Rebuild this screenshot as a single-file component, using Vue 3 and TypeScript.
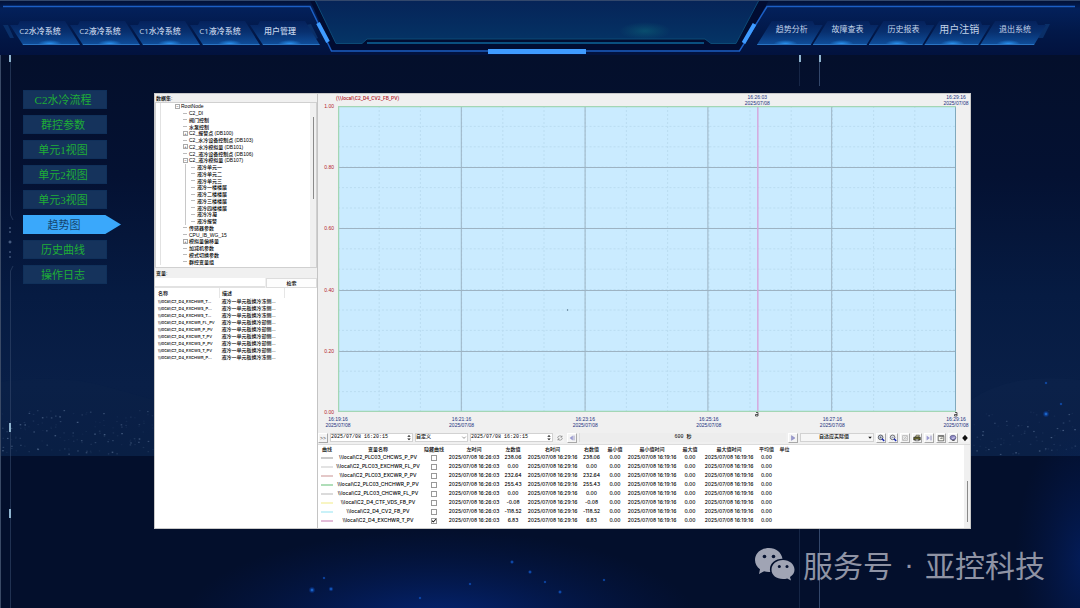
<script setup lang="ts">
import { ref } from 'vue'

interface TreeRow { text: string; level: number; mark?: '+' | '-' }
interface Curve { name: string; color: string; hidden: boolean; left: string; right: string }

const leftTabs = ['C2水冷系统', 'C2液冷系统', 'C1水冷系统', 'C1液冷系统', '用户管理']
const rightTabs = ['趋势分析', '故障查表', '历史报表', '用户注销', '退出系统']
const menu = ['C2水冷流程', '群控参数', '单元1视图', '单元2视图', '单元3视图', '趋势图', '历史曲线', '操作日志']
const active = ref('趋势图')

const tree: TreeRow[] = [
  { text: 'RootNode', level: 0, mark: '-' },
  { text: 'C2_DI', level: 1 },
  { text: '阀门控制', level: 1 },
  { text: '水泵控制', level: 1 },
  { text: 'C2_报警点 (DB100)', level: 1, mark: '+' },
  { text: 'C2_水冷设备控制点 (DB103)', level: 1 },
  { text: 'C2_水冷模拟量 (DB101)', level: 1, mark: '+' },
  { text: 'C2_液冷设备控制点 (DB106)', level: 1 },
  { text: 'C2_液冷模拟量 (DB107)', level: 1, mark: '-' },
  { text: '液冷单元一', level: 2 },
  { text: '液冷单元二', level: 2 },
  { text: '液冷单元三', level: 2 },
  { text: '液冷一楼楼层', level: 2 },
  { text: '液冷二楼楼层', level: 2 },
  { text: '液冷三楼楼层', level: 2 },
  { text: '液冷四楼楼层', level: 2 },
  { text: '液冷冷凝', level: 2 },
  { text: '液冷报警', level: 2 },
  { text: '传感器参数', level: 1 },
  { text: 'CPU_IB_WG_15', level: 1 },
  { text: '模拟量偏移量', level: 1, mark: '+' },
  { text: '加减机参数', level: 1 },
  { text: '模式切换参数', level: 1 },
  { text: '群控变量组', level: 1 },
]

const variables = [
  ['\\\\local\\C2_D4_EXCHWR_T...', '液冷一单元板换冷冻侧...'],
  ['\\\\local\\C2_D4_EXCHWS_P...', '液冷一单元板换冷冻侧...'],
  ['\\\\local\\C2_D4_EXCHWS_T...', '液冷一单元板换冷冻侧...'],
  ['\\\\local\\C2_D4_EXCWR_FL_PV', '液冷一单元板换冷却侧...'],
  ['\\\\local\\C2_D4_EXCWR_P_PV', '液冷一单元板换冷却侧...'],
  ['\\\\local\\C2_D4_EXCWR_T_PV', '液冷一单元板换冷却侧...'],
  ['\\\\local\\C2_D4_EXCWS_P_PV', '液冷一单元板换冷却侧...'],
  ['\\\\local\\C2_D4_EXCWS_T_PV', '液冷一单元板换冷却侧...'],
  ['\\\\local\\C2_D4_EXCHWR_P...', '液冷一单元板换冷冻侧...'],
]

const yTicks = ['1.00', '0.80', '0.60', '0.40', '0.20', '0.00']
const xTicks = ['16:19:16', '16:21:16', '16:23:16', '16:25:16', '16:27:16', '16:29:16']
const date = '2025/07/08'
const range = (n: number): number[] => Array.from({ length: n }, (_, i) => i)

const columns = ['曲线', '变量名称', '隐藏曲线', '左时间', '左数值', '右时间', '右数值', '最小值', '最小值时间', '最大值', '最大值时间', '平均值', '单位']
const curves = ref<Curve[]>([
  { name: '\\\\local\\C2_PLC03_CHCWS_P_PV', color: '#a8a8a8', hidden: false, left: '238.06', right: '238.06' },
  { name: '\\\\local\\C2_PLC03_EXCHWR_FL_PV', color: '#d0d0d0', hidden: false, left: '0.00', right: '0.00' },
  { name: '\\\\local\\C2_PLC03_EXCWR_P_PV', color: '#d2a3a3', hidden: false, left: '232.64', right: '232.64' },
  { name: '\\\\local\\C2_PLC03_CHCHWR_P_PV', color: '#7cc98a', hidden: false, left: '255.43', right: '255.43' },
  { name: '\\\\local\\C2_PLC03_CHCWR_FL_PV', color: '#c4c4c4', hidden: false, left: '0.00', right: '0.00' },
  { name: '\\\\local\\C2_D4_CTF_VDS_FB_PV', color: '#f3ee9c', hidden: false, left: '-0.08', right: '-0.08' },
  { name: '\\\\local\\C2_D4_CV2_FB_PV', color: '#a5e8f3', hidden: false, left: '-118.52', right: '-118.52' },
  { name: '\\\\local\\C2_D4_EXCHWR_T_PV', color: '#cf8fbe', hidden: true, left: '6.83', right: '6.83' },
])

// Scattered city lights along the horizon.
const lights = range(230).map((i) => {
  const a = (i * 7919 + 131) % 997
  const b = (i * i * 31 + i * 171 + 47) % 613
  const left = i % 3 !== 0
  return {
    x: left ? (a / 997) * 154 : 972 + (a / 997) * 104,
    y: 410 + (b / 613) * 44,
    o: 0.05 + Math.pow(((i * 37) % 11) / 10, 3) * 0.3,
  }
})
const sparks = [
  [312, 590, 1.6], [331, 589, 1.2], [324, 578, 0.8], [512, 562, 1], [530, 572, 1], [470, 584, 0.8],
  [560, 592, 1], [604, 580, 0.8], [1046, 414, 1.6], [1061, 404, 0.8], [1046, 383, 0.8], [420, 598, 0.8], [545, 582, 0.8],
]
</script>

<template>
  <div class="page">
    <svg class="backdrop" viewBox="0 0 1080 608" preserveAspectRatio="none" aria-hidden="true">
      <defs>
        <linearGradient id="sky" x1="0" y1="0" x2="0" y2="1">
          <stop offset="0" stop-color="#040f2b" />
          <stop offset="0.3" stop-color="#041132" />
          <stop offset="0.6" stop-color="#061b42" />
          <stop offset="0.82" stop-color="#091f47" />
          <stop offset="1" stop-color="#081d43" />
        </linearGradient>
        <radialGradient id="glow">
          <stop offset="0" stop-color="#04309a" stop-opacity="0.7" />
          <stop offset="1" stop-color="#04206a" stop-opacity="0" />
        </radialGradient>
        <radialGradient id="spark">
          <stop offset="0" stop-color="#3f9dff" />
          <stop offset="0.3" stop-color="#1262d8" stop-opacity="0.7" />
          <stop offset="1" stop-color="#0a3aa8" stop-opacity="0" />
        </radialGradient>
      </defs>
      <rect width="1080" height="608" fill="#030f2c" />
      <rect y="55" width="1080" height="401" fill="url(#sky)" />
      <path d="M0 382 Q60 374 104 386 T154 400 V456 H0Z" fill="#0c2348" opacity="0.3" />
      <path d="M971 400 Q1010 372 1080 380 V456 H971Z" fill="#0f284f" opacity="0.3" />
      <rect v-for="(l, i) in lights" :key="i" :x="l.x" :y="l.y" width="1.6" height="1.2" fill="#a9c4e6" :opacity="l.o" />
      <ellipse cx="440" cy="625" rx="260" ry="95" fill="url(#glow)" />
      <ellipse cx="1085" cy="560" rx="70" ry="140" fill="url(#glow)" opacity="0.6" />
      <circle v-for="(s, i) in sparks" :key="'s' + i" :cx="s[0]" :cy="s[1]" :r="s[2] * 2.2" fill="url(#spark)" />
      <g fill="none" stroke="#33476b">
        <path d="M10.500 62V215L13 220M13 266L10.500 271V608" opacity="0.6" />
        <path d="M799.500 62V86M799.500 529V608" opacity="0.4" />
        <path d="M819.500 62V86M819.500 529V608" />
      </g>
      <path d="M8.500 242H11.500M10 240.500V243.500M9 228H11M9 232H11M9 252H11M9 257H11" stroke="#5d7397" fill="none" />
      <g fill="#8fb4cf">
        <rect x="9" y="55" width="2" height="7" />
        <rect x="9" y="423" width="2" height="9" />
        <rect x="9" y="509" width="2" height="9" />
        <rect x="799" y="55" width="2" height="7" />
        <rect x="819" y="55" width="2" height="7" />
      </g>
      <path d="M0.500 608V0.500H1080" stroke="#3a4a66" fill="none" />
    </svg>

    <header class="topbar">
      <svg class="frame" viewBox="0 0 1080 55" preserveAspectRatio="none" aria-hidden="true">
        <defs>
          <linearGradient id="bar" x1="0" y1="0" x2="0" y2="1">
            <stop offset="0" stop-color="#021033" />
            <stop offset="0.16" stop-color="#03205a" />
            <stop offset="0.6" stop-color="#021848" />
            <stop offset="1" stop-color="#02123e" />
          </linearGradient>
          <linearGradient id="hood" x1="0" y1="0" x2="0" y2="1">
            <stop offset="0" stop-color="#062458" />
            <stop offset="0.6" stop-color="#052d60" />
            <stop offset="1" stop-color="#053566" />
          </linearGradient>
          <radialGradient id="haze">
            <stop offset="0" stop-color="#0b6276" stop-opacity="0.6" />
            <stop offset="1" stop-color="#0b5872" stop-opacity="0" />
          </radialGradient>
        </defs>
        <rect width="1080" height="55" fill="url(#bar)" />
        <path d="M310 0L333 52H740L769 0Z" fill="#010c31" />
        <path d="M315 0L336 43.500H362L367 39H705L711 43.500H736L759 0Z" fill="url(#hood)" stroke="#0c4a76" />
        <path d="M367 43H704" stroke="#0a4f80" stroke-width="2" />
        <ellipse cx="645" cy="31" rx="26" ry="9" fill="url(#haze)" />
        <path d="M3 6.500H310L331.500 51H739.500L767 6.500H1075" fill="none" stroke="#1c5fc4" stroke-width="1.500" />
        <path d="M318 23L328 42M754.500 24L743.500 43" stroke="#3f9bff" stroke-width="4" />
        <rect x="488" y="49" width="98" height="5" fill="#3f9bff" />
        <path d="M3 25L8 25L14 38H10ZM306 25L311 24L318 38L314 40ZM1045 24H1050L1043 38H1038Z" fill="#0a2f68" />
        <path d="M0 0.500H1080" stroke="#33486c" />
      </svg>
      <nav class="tabs tabs-left" aria-label="系统">
        <button v-for="t in leftTabs" :key="t" type="button"><span>{{ t }}</span></button>
      </nav>
      <nav class="tabs tabs-right" aria-label="功能">
        <button v-for="t in rightTabs" :key="t" type="button" :class="{ large: t === '用户注销' }"><span>{{ t }}</span></button>
      </nav>
    </header>

    <main class="content">
      <nav class="menu" aria-label="菜单">
        <button v-for="m in menu" :key="m" type="button" :class="{ active: m === active }" @click="active = m">{{ m }}</button>
      </nav>

      <section class="window">
        <aside class="browser">
          <h2>数据集:</h2>
          <div class="tree-box">
            <ul class="tree">
              <li v-for="(r, i) in tree" :key="i" :class="'level-' + r.level">
                <i :class="['twig', { boxed: r.mark }]">{{ r.mark === '+' ? '+' : r.mark ? '−' : '' }}</i>{{ r.text }}
              </li>
            </ul>
            <div class="track"><div class="thumb"></div></div>
          </div>
          <label class="var-label" for="var-search">变量:</label>
          <div class="search">
            <input id="var-search" type="text" />
            <button type="button">检索</button>
          </div>
          <div class="var-box">
            <table class="vars">
              <thead><tr><th>名称</th><th>描述</th></tr></thead>
              <tbody>
                <tr v-for="v in variables" :key="v[0]"><td>{{ v[0] }}</td><td>{{ v[1] }}</td></tr>
              </tbody>
            </table>
          </div>
        </aside>

        <div class="trend">
          <div class="chart">
            <div class="legend">(\\local\C2_D4_CV2_FB_PV)</div>
            <div class="marks">
              <span class="lead"></span>
              <span class="tick">16:26:03<br />{{ date }}</span>
              <span class="rest"></span>
              <span class="tick">16:29:16<br />{{ date }}</span>
            </div>
            <div class="y-axis"><span v-for="y in yTicks" :key="y">{{ y }}</span></div>
            <svg class="plot" viewBox="0 0 619 306" preserveAspectRatio="none" role="img" aria-label="趋势图">
              <rect width="619" height="306" fill="#caebff" />
              <g stroke="#a9cde2" stroke-dasharray="2 2" opacity="0.45">
                <path v-for="i in range(15)" :key="'v' + i" :d="`M${(i * 619) / 15} 0V306`" />
                <path v-for="i in range(15)" :key="'h' + i" :d="`M0 ${(i * 306) / 15}H619`" />
              </g>
              <g stroke="#9db3c3" fill="none">
                <path v-for="i in range(4)" :key="'mv' + i" :d="`M${Math.round(((i + 1) * 619) / 5) - 0.5} 0V306`" />
                <path v-for="i in range(4)" :key="'mh' + i" :d="`M0 ${Math.round(((i + 1) * 306) / 5) + 0.5}H619`" />
              </g>
              <path d="M420.500 0V306" stroke="#d5a8de" stroke-width="1.500" />
              <path d="M618.500 0V306" stroke="#7fa9bd" />
              <path d="M0.500 306V0.500H619M0 305.500H619" fill="none" stroke="#a3d6b5" stroke-width="1.500" />
              <circle cx="230" cy="204" r="0.700" fill="#4b6a80" />
            </svg>
            <div class="handles">
              <span class="lead"></span>
              <svg viewBox="0 0 4 5"><path d="M1 0.500H3V4H0.500V2.500H3" fill="none" stroke="#333" stroke-width="0.800" /></svg>
              <span class="rest"></span>
              <svg viewBox="0 0 4 5"><path d="M1 0.500H3V4H0.500V2.500H3" fill="none" stroke="#333" stroke-width="0.800" /></svg>
            </div>
            <div class="x-axis"><span v-for="x in xTicks" :key="x" class="tick">{{ x }}<br />{{ date }}</span></div>
          </div>

          <div class="toolbar">
            <button type="button" class="tool" aria-label="展开">&gt;&gt;</button>
            <div class="field stamp">
              <input type="text" value="2025/07/08 16:20:15" aria-label="开始时间" />
              <svg viewBox="0 0 6 8"><path d="M1 3L3 1L5 3ZM1 5L3 7L5 5Z" fill="#222" /></svg>
            </div>
            <div class="field span">
              <select aria-label="时间范围"><option>自定义</option></select>
              <svg viewBox="0 0 6 8"><path d="M1 3L3 5L5 3" fill="none" stroke="#555" stroke-width="0.700" /></svg>
            </div>
            <div class="field stamp">
              <input type="text" value="2025/07/08 16:20:15" aria-label="结束时间" />
              <svg viewBox="0 0 6 8"><path d="M1 3L3 1L5 3ZM1 5L3 7L5 5Z" fill="#222" /></svg>
            </div>
            <button type="button" class="tool flat" aria-label="刷新">
              <svg viewBox="0 0 10 10"><path d="M2 5a3 2.600 0 0 1 5.500-1.500M8 5a3 2.600 0 0 1-5.500 1.500M7.500 2V4H5.500M2.500 8V6H4.500" fill="none" stroke="#777" stroke-width="0.800" /></svg>
            </button>
            <button type="button" class="tool" aria-label="后退">
              <svg viewBox="0 0 10 10"><path d="M6 2V8L2 5Z" fill="#9a9ad0" /><path d="M7.500 2V8" stroke="#8888b8" /></svg>
            </button>
            <output class="duration">600 秒</output>
            <button type="button" class="tool" aria-label="前进">
              <svg viewBox="0 0 10 10"><path d="M3 2V8L7.500 5Z" fill="#9a9ad0" stroke="#7777b0" stroke-width="0.500" /></svg>
            </button>
            <div class="field mode">
              <select aria-label="数值模式"><option>自适应实际值</option></select>
              <svg viewBox="0 0 6 8"><path d="M1 3H5L3 5.500Z" fill="#111" /></svg>
            </div>
            <button type="button" class="tool" aria-label="放大">
              <svg viewBox="0 0 10 10"><circle cx="4.500" cy="4.200" r="2.900" fill="#cfd8ee" stroke="#333" stroke-width="0.900" /><path d="M3.300 4.200H5.700M4.500 3V5.400" stroke="#333" stroke-width="0.600" /><path d="M6.300 6L9 8.800" stroke="#1b2bb5" stroke-width="2" /></svg>
            </button>
            <button type="button" class="tool" aria-label="缩小">
              <svg viewBox="0 0 10 10"><circle cx="4.500" cy="4.200" r="2.900" fill="#e4e8f2" stroke="#444" stroke-width="0.900" /><path d="M3.300 4.200H5.700" stroke="#333" stroke-width="0.600" /><path d="M6.300 6L9 8.800" stroke="#1b2bb5" stroke-width="2" /></svg>
            </button>
            <button type="button" class="tool" aria-label="还原">
              <svg viewBox="0 0 10 10"><path d="M2 2H8V8H2ZM3.500 4.500L5 3M5 7L7 5M3 7L7 3" fill="none" stroke="#aaa" stroke-width="0.900" /></svg>
            </button>
            <button type="button" class="tool" aria-label="打印">
              <svg viewBox="0 0 10 10"><path d="M3 4L4 1.500H8L7.200 4Z" fill="#e8e2a0" stroke="#222" stroke-width="0.700" /><path d="M1 4H9V7.500H1Z" fill="#6f6f2c" stroke="#222" stroke-width="0.900" /><path d="M3 6.500H7V8.500H3Z" fill="#eee" stroke="#222" stroke-width="0.600" /></svg>
            </button>
            <button type="button" class="tool" aria-label="末尾">
              <svg viewBox="0 0 10 10"><path d="M2 2V8L6 5Z" fill="#9a9ad0" /><path d="M7.500 2V8" stroke="#7777b0" /></svg>
            </button>
            <button type="button" class="tool" aria-label="保存">
              <svg viewBox="0 0 10 10"><path d="M1.500 2H8.500V8.500H1.500Z" fill="#f7f7ee" stroke="#444" stroke-width="0.900" /><path d="M2 3H8M4 5.500H7M6 4.500L7.500 3" stroke="#555" stroke-width="0.900" /></svg>
            </button>
            <button type="button" class="tool" aria-label="设置">
              <svg viewBox="0 0 10 10"><ellipse cx="5" cy="4.600" rx="3.600" ry="3" fill="#8d88c4" stroke="#4a4a78" stroke-width="0.800" /><path d="M4 5L5 6L7 3.500" fill="none" stroke="#fff" stroke-width="0.900" /><path d="M4 8H7" stroke="#333" /></svg>
            </button>
            <button type="button" class="tool flat" aria-label="移动">
              <svg viewBox="0 0 10 10"><path d="M5 1L8.500 5L5 9L1.500 5Z" fill="#111" /></svg>
            </button>
          </div>

          <div class="data">
            <table class="curves">
              <colgroup><col v-for="(c, i) in columns" :key="c" :class="'c' + i" /><col /></colgroup>
              <thead><tr><th v-for="c in columns" :key="c">{{ c }}</th><th></th></tr></thead>
              <tbody>
                <tr v-for="c in curves" :key="c.name">
                  <td><svg class="swatch" viewBox="0 0 12 2"><path d="M0 1H12" :stroke="c.color" stroke-width="1.200" /></svg></td>
                  <td>{{ c.name }}</td>
                  <td><input v-model="c.hidden" type="checkbox" :aria-label="'隐藏 ' + c.name" /></td>
                  <td>{{ date }} 16:26:03</td>
                  <td>{{ c.left }}</td>
                  <td>{{ date }} 16:29:16</td>
                  <td>{{ c.right }}</td>
                  <td>0.00</td>
                  <td>{{ date }} 16:19:16</td>
                  <td>0.00</td>
                  <td>{{ date }} 16:19:16</td>
                  <td>0.00</td>
                  <td></td>
                  <td></td>
                </tr>
              </tbody>
            </table>
            <div class="track"><div class="thumb"></div></div>
          </div>
        </div>
      </section>
    </main>

    <footer class="brand">
      <svg viewBox="0 0 40 33" aria-hidden="true">
        <path d="M14 0C6 0 0 5 0 12c0 4 2 7 5 9.200L4 26l5-2.700c1.600.5 3.300.7 5 .7h1.200C13.500 16 20 10.600 27.500 10.800C26.500 4.500 21 0 14 0Z" fill="#a0a4b4" />
        <path d="M28 12c-6.500 0-11.500 4.300-11.500 9.700S21.500 31 28 31c1.500 0 2.900-.2 4.200-.6L36 32.500l-1-3.500c2.700-1.700 4.500-4.300 4.500-7.300C39.500 16.300 34.500 12 28 12Z" fill="#a0a4b4" />
        <g fill="#061231"><circle cx="9.500" cy="8.500" r="1.800" /><circle cx="18.500" cy="8.500" r="1.800" /><circle cx="24.300" cy="18.500" r="1.500" /><circle cx="32" cy="18.500" r="1.500" /></g>
      </svg>
      <p><span>服务号</span><span class="dot">·</span><span>亚控科技</span></p>
    </footer>
  </div>
</template>

<style>
body {
  margin: 0;
  background: #030f2c;
}
</style>

<style scoped>
* {
  box-sizing: border-box;
}
.page {
  position: relative;
  min-height: 100vh;
  overflow: hidden;
  font-family: "Liberation Sans", "Noto Sans CJK SC", sans-serif;
  font-size: 5px;
  line-height: 6px;
  color: #000;
}
button, input, select {
  font: inherit;
  color: inherit;
  margin: 0;
  padding: 0;
  border: 0;
  border-radius: 0;
  background: none;
  appearance: none;
  min-width: 0;
}
svg {
  display: block;
}
.backdrop {
  position: absolute;
  inset: 0;
  width: 100%;
  height: 100%;
}

.topbar {
  position: relative;
  display: flex;
  justify-content: space-between;
  height: 55px;
  padding: 20px 32px 10px 8px;
}
.frame {
  position: absolute;
  inset: 0;
  width: 100%;
  height: 100%;
}
.tabs {
  position: relative;
  display: flex;
  flex: 0 0 30%;
}
.tabs-right {
  flex-basis: 28%;
}
.tabs button {
  flex: 1 1 0;
  margin-left: -12px;
  padding: 0 8px 2px 0;
  font: 500 8px/12px "Open Sans", "Noto Sans CJK SC", sans-serif;
  white-space: nowrap;
  color: #c3d3ea;
  border-bottom: 1px solid #2a74c4;
  background:
    radial-gradient(ellipse 12px 4px at 58% 100%, #2a94f2, transparent),
    linear-gradient(#05205a 0, #08306f 50%, #0f4c98 100%);
  clip-path: polygon(2px 20%, 10px 20%, 12px 4%, calc(100% - 15px) 4%, 100% 100%, 15px 100%);
}
.tabs button:first-child {
  margin-left: 0;
}
.tabs-right button {
  padding: 0 0 4px 2px;
  font-family: "Liberation Serif", "Noto Sans CJK SC", serif;
  font-weight: 400;
  background:
    radial-gradient(ellipse 12px 4px at 42% 100%, #2a94f2, transparent),
    linear-gradient(#05205a 0, #08306f 50%, #0f4c98 100%);
  clip-path: polygon(15px 4%, calc(100% - 12px) 4%, calc(100% - 10px) 20%, calc(100% - 2px) 20%, calc(100% - 14px) 100%, 0 100%);
}
.tabs button.large {
  font-size: 10px;
}

.content {
  position: relative;
  display: flex;
  align-items: flex-start;
  gap: 33px;
  padding: 35px 109px 0 23px;
}
.menu {
  flex: 0 0 98px;
  display: flex;
  flex-direction: column;
  gap: 6px;
}
.menu button {
  width: 84px;
  height: 19px;
  padding-right: 4px;
  border: 1px solid #10305a;
  background: #15335c;
  color: #1fae36;
  font: 11px/16px "Liberation Serif", "Noto Sans CJK SC", serif;
}
.menu button.active {
  width: 98px;
  padding-right: 16px;
  border: 0;
  background: #3aa8fb;
  color: #14456e;
  clip-path: polygon(0 0, 84% 0, 100% 50%, 84% 100%, 0 100%);
}

.window {
  flex: 1 1 0;
  min-width: 0;
  display: flex;
  margin-top: 3px;
  border: 1px solid #c9c9c9;
  background: #f0f0f0;
  font-weight: 500;
}
.browser {
  flex: 0 0 20%;
  min-width: 0;
  display: flex;
  flex-direction: column;
  border-right: 1px solid #c4c4c4;
}
.browser h2 {
  margin: 0;
  padding: 1px 0 0 1px;
  height: 8px;
  font: inherit;
}
.tree-box {
  display: flex;
  height: 166px;
  border: 1px solid #d0d0d0;
  background: #fff;
}
.tree {
  flex: 1;
  height: 162px;
  margin: 0 0 0 4px;
  padding: 0 0 0 14px;
  list-style: none;
  display: flex;
  flex-direction: column;
  border-left: 1px solid #e2e2e2;
}
.tree li {
  flex: 1 1 0;
  min-height: 0;
  display: flex;
  align-items: center;
  gap: 1px;
  white-space: nowrap;
}
.tree .level-1 {
  margin-left: 8px;
}
.tree .level-2 {
  margin-left: 10px;
  padding-left: 5px;
  border-left: 1px solid #c8c8c8;
}
.twig {
  flex: 0 0 5px;
  display: flex;
  align-items: center;
  justify-content: center;
  height: 1px;
  background: linear-gradient(#bbb, #bbb) 0 0 / 4px 1px no-repeat;
  font-style: normal;
}
.twig.boxed {
  flex-basis: 5px;
  height: 5px;
  border: 1px solid #aaa;
  background: #fff;
  font-size: 4px;
  line-height: 3px;
}
.track {
  flex: 0 0 6px;
  background: #f0f0f0;
}
.thumb {
  width: 1px;
  margin: 14px auto 0;
  height: 82px;
  background: #8a8a8a;
}
.var-label {
  display: block;
  height: 10px;
  padding: 2px 0 0 1px;
}
.search {
  display: flex;
  height: 10px;
  gap: 1px;
}
.search input {
  flex: 1;
  background: #fff;
  border-bottom: 2px solid #e2e2e2;
}
.search button {
  flex: 0 0 51px;
  background: #fdfdfd;
  border: 1px solid #ddd;
  line-height: 8px;
}
.var-box {
  flex: 1;
  background: #fff;
}
.vars {
  width: 80%;
  border-collapse: collapse;
  table-layout: fixed;
}
.vars th, .vars td {
  height: 7px;
  padding: 0 0 0 2px;
  line-height: 7px;
  font-weight: 500;
  text-align: left;
  white-space: nowrap;
}
.vars td:first-child {
  font-family: Inter, sans-serif;
  font-size: 4px;
}
.vars th:first-child, .vars td:first-child {
  padding-left: 3px;
}
.vars th {
  height: 10px;
  border-right: 1px solid #e6e6e6;
}

.trend {
  flex: 1;
  min-width: 0;
  display: flex;
  flex-direction: column;
}
.chart {
  display: grid;
  grid-template-columns: 20px 1fr 14px;
  grid-template-rows: 12px 306px 4px 15px;
  color: #23307f;
}
.legend {
  grid-area: 1 / 2;
  margin-left: -2px;
  padding-top: 1px;
  font-family: Roboto, sans-serif;
  color: #b3222b;
}
.marks, .handles {
  display: flex;
}
.marks {
  grid-area: 1 / 2;
}
.lead {
  flex: 420 0 0;
}
.rest {
  flex: 199 0 0;
}
.tick {
  flex: 0 0 30px;
  margin: 0 -15px;
  white-space: nowrap;
  text-align: center;
}
.y-axis {
  grid-area: 2 / 1;
  display: flex;
  flex-direction: column;
  justify-content: space-between;
  margin: -3px 0;
  padding-right: 4px;
  text-align: right;
  color: #b3222b;
}
.plot {
  grid-area: 2 / 2;
  width: 100%;
  height: 100%;
}
.handles {
  grid-area: 3 / 2;
}
.handles svg {
  flex: 0 0 4px;
  height: 5px;
  margin: 0 -2px;
}
.x-axis {
  grid-area: 4 / 2;
  display: flex;
  justify-content: space-between;
}

.toolbar {
  display: flex;
  align-items: center;
  gap: 2px;
  height: 13px;
  padding: 1px 0;
}
.tool {
  flex: 0 0 10px;
  height: 10px;
  line-height: 8px;
  background: #f4f4f4;
  border: 1px solid;
  border-color: #fff #a8a8a8 #a8a8a8 #fff;
  color: #444;
}
.tool svg {
  width: 8px;
  height: 8px;
}
.tool.flat {
  border-color: #f0f0f0;
}
.field {
  display: flex;
  align-items: center;
  height: 9px;
  background: #fff;
  border: 1px solid #d2d2d2;
  font-family: "Liberation Mono", "Noto Sans CJK SC", monospace;
}
.field input, .field select {
  flex: 1;
  height: 7px;
  line-height: 7px;
}
.field svg {
  flex: 0 0 6px;
  height: 7px;
}
.stamp {
  flex: 0 1 83px;
}
.span {
  flex: 0 1 53px;
}
.mode {
  flex: 0 1 74px;
  background: #f6f6f6;
}
.mode select {
  text-align: center;
  text-align-last: center;
}
.duration {
  flex: 1 1 0;
  height: 9px;
  line-height: 9px;
  text-align: center;
  border-left: 1px solid #ddd;
  background: #ededed;
  font-family: "Liberation Mono", "Noto Sans CJK SC", monospace;
}

.data {
  display: flex;
  align-items: stretch;
  height: 84px;
  background: #fff;
  border-top: 1px solid #dcdcdc;
}
.curves {
  flex: 1;
  min-width: 0;
  border-collapse: collapse;
  table-layout: fixed;
  align-self: flex-start;
  font-family: Inter, "Noto Sans CJK SC", sans-serif;
}
.curves th, .curves td {
  height: 9px;
  padding: 0;
  line-height: 9px;
  font-weight: 500;
  text-align: center;
  white-space: nowrap;
}
.curves th {
  height: 8px;
  line-height: 8px;
}
.c0 { width: 18px; }
.c1 { width: 84px; }
.c2 { width: 28px; }
.c3 { width: 52px; }
.c4 { width: 26px; }
.c5 { width: 53px; }
.c6 { width: 25px; }
.c7 { width: 22px; }
.c8 { width: 52px; }
.c9 { width: 24px; }
.c10 { width: 54px; }
.c11 { width: 21px; }
.c12 { width: 15px; }
.swatch {
  width: 12px;
  height: 2px;
  margin: 0 auto;
}
.curves input {
  display: block;
  width: 6px;
  height: 6px;
  margin: 0 auto;
  border: 1px solid #999;
  background: #fff;
}
.curves input:checked::after {
  content: "";
  display: block;
  width: 4px;
  height: 4px;
  background: #111;
  clip-path: polygon(0 45%, 35% 70%, 100% 0, 100% 30%, 35% 100%, 0 75%);
}
.data .thumb {
  height: 41px;
  margin-top: 36px;
}

.brand {
  position: relative;
  display: flex;
  justify-content: flex-end;
  align-items: center;
  gap: 8px;
  padding: 15px 35px 0 0;
  color: #8f93a4;
}
.brand svg {
  width: 40px;
  height: 33px;
}
.brand p {
  display: flex;
  margin: 0;
  font: 30px/40px "Noto Sans CJK SC", sans-serif;
}
.brand .dot {
  width: 32px;
  text-align: center;
  font-family: "Liberation Sans", sans-serif;
}
</style>
